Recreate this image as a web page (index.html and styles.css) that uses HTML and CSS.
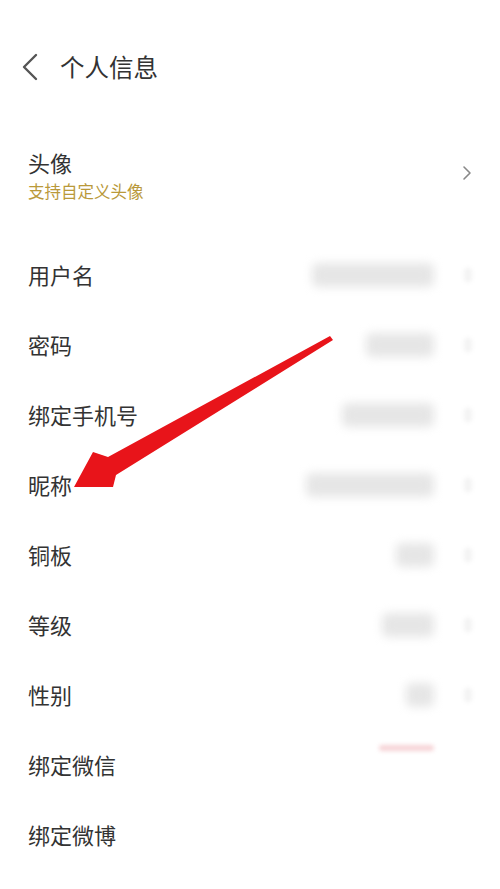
FILE: index.html
```html
<!DOCTYPE html>
<html lang="zh-CN">
<head>
<meta charset="utf-8">
<title>个人信息</title>
<link rel="stylesheet" href="styles.css">
</head>
<body>
<div class="page">
  <header class="header">
    <svg class="back" width="18" height="28" viewBox="0 0 18 28"><path d="M15 2 L3 14 L15 26" fill="none" stroke="#555" stroke-width="2.4" stroke-linecap="round" stroke-linejoin="round"/></svg>
    <h1 class="title">个人信息</h1>
  </header>

  <section class="avatar-row">
    <div class="avatar-text">
      <div class="label">头像</div>
      <div class="sub">支持自定义头像</div>
    </div>
    <svg class="chev dark" width="10" height="16" viewBox="0 0 10 16"><path d="M2 2 L8 8 L2 14" fill="none" stroke="#888" stroke-width="1.6" stroke-linecap="round" stroke-linejoin="round"/></svg>
  </section>

  <ul class="list">
    <li class="row"><span class="label">用户名</span><span class="right"><span class="blob w125"></span><span class="chev-faint"></span></span></li>
    <li class="row"><span class="label">密码</span><span class="right"><span class="blob w70"></span><span class="chev-faint"></span></span></li>
    <li class="row"><span class="label">绑定手机号</span><span class="right"><span class="blob w95"></span><span class="chev-faint"></span></span></li>
    <li class="row"><span class="label">昵称</span><span class="right"><span class="blob w130"></span><span class="chev-faint"></span></span></li>
    <li class="row"><span class="label">铜板</span><span class="right"><span class="blob w40"></span><span class="chev-faint"></span></span></li>
    <li class="row"><span class="label">等级</span><span class="right"><span class="blob w55"></span><span class="chev-faint"></span></span></li>
    <li class="row"><span class="label">性别</span><span class="right"><span class="blob w30"></span><span class="chev-faint"></span></span></li>
    <li class="row"><span class="label">绑定微信</span><span class="right top"><span class="pink"></span><span class="chev-space"></span></span></li>
    <li class="row"><span class="label">绑定微博</span><span class="right"></span></li>
  </ul>

  <svg class="arrow" width="500" height="889" viewBox="0 0 500 889">
    <polygon points="330,336 333,340 116,475 113,487 74,487 93,452 108,457" fill="#e8141a"/>
  </svg>
</div>
</body>
</html>
```

FILE: styles.css
```css
* { box-sizing: border-box; }
html, body { margin: 0; padding: 0; background: #fff; }
body {
  font-family: "Noto Sans CJK SC", "Noto Sans", sans-serif;
  color: #333;
  width: 500px;
  height: 889px;
  overflow: hidden;
}
.page { position: relative; width: 500px; height: 889px; }

.header {
  height: 134px;
  display: flex;
  align-items: center;
  padding-left: 21px;
}
.back { display: block; }
.title {
  margin: 0 0 0 21px;
  font-size: 24.5px;
  font-weight: 400;
  line-height: 34px;
  color: #333;
}

.avatar-row {
  height: 106px;
  padding: 13px 28px 0 28px;
  display: flex;
  justify-content: space-between;
  align-items: flex-start;
}
.avatar-text .label { font-size: 22px; line-height: 30px; }
.sub {
  margin-top: 4px;
  font-size: 16.5px;
  line-height: 20px;
  color: #b9993a;
}
.chev.dark { margin-top: 18px; display: block; }

.list { list-style: none; margin: 0; padding: 0; }
.row {
  height: 70px;
  padding: 0 28px;
  display: flex;
  align-items: center;
  justify-content: space-between;
}
.row .label { margin-top: -3px; }
.label { font-size: 22px; line-height: 30px; color: #333; }
.right { display: flex; align-items: center; gap: 30px; }
.right.top { align-self: flex-start; margin-top: 15px; }

.blob {
  display: block;
  height: 24px;
  background: #e6e6e6;
  border-radius: 6px;
  filter: blur(5px);
}
.w125 { width: 122px; }
.w130 { width: 128px; }
.w95 { width: 92px; }
.w70 { width: 68px; }
.w55 { width: 52px; }
.w40 { width: 38px; }
.w30 { width: 28px; }

.pink {
  display: block;
  width: 55px;
  height: 6px;
  background: #f6d3d6;
  border-radius: 3px;
  filter: blur(2px);
}
.chev-faint {
  display: block;
  width: 8px;
  height: 14px;
  background: #f3f3f3;
  border-radius: 3px;
  filter: blur(2px);
}
.chev-space { display: block; width: 8px; }

.arrow {
  position: absolute;
  left: 0;
  top: 0;
  pointer-events: none;
}
```
